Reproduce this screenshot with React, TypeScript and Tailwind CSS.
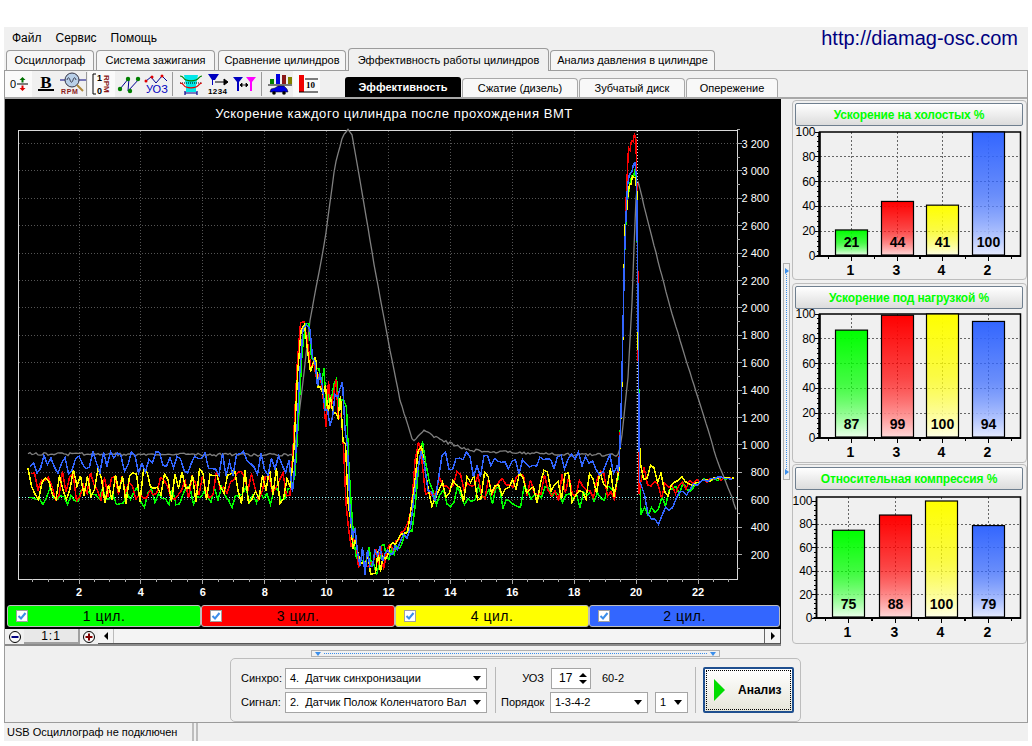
import React from "react";

type Pt = [number, number];

const TABS = [
  { label: "Осциллограф", cls: "w-[88px]" },
  { label: "Система зажигания", cls: "ml-[2px] w-[119px]" },
  { label: "Сравнение цилиндров", cls: "ml-[3px] w-[128px]" },
  { label: "Эффективность работы цилиндров", cls: "ml-[2px] w-[201px]", active: true },
  { label: "Анализ давления в цилиндре", cls: "ml-[1px] w-[165px]" },
];

const SUBTABS = [
  { label: "Сжатие (дизель)", w: "w-[116px]" },
  { label: "Зубчатый диск", w: "w-[106px]" },
  { label: "Опережение", w: "w-[92px]" },
];

const CHANNELS = [
  { label: "1 цил.", bg: "bg-[#00ff00]", w: "w-[194px]" },
  { label: "3 цил.", bg: "bg-[#ff0000]", w: "w-[194px]" },
  { label: "4 цил.", bg: "bg-[#ffff00]", w: "w-[194px]" },
  { label: "2 цил.", bg: "bg-[#3366ff]", w: "w-[191px]" },
];

const BAR_COLORS = [
  { id: "g", top: "#00ff00", bottom: "#eaffea" },
  { id: "r", top: "#ff0000", bottom: "#ffd8d8" },
  { id: "y", top: "#ffff00", bottom: "#ffffe4" },
  { id: "b", top: "#3366ff", bottom: "#e4eaff" },
];

function rng(seed: number) {
  let a = seed;
  return () => {
    a = (a + 0x6d2b79f5) | 0;
    let t = Math.imul(a ^ (a >>> 15), 1 | a);
    t = (t + Math.imul(t ^ (t >>> 7), 61 | t)) ^ t;
    return ((t ^ (t >>> 14)) >>> 0) / 4294967296;
  };
}

function interp(list: Pt[], x: number) {
  for (let i = 1; i < list.length; i++) {
    if (x <= list[i][0]) {
      const [x0, y0] = list[i - 1];
      const [x1, y1] = list[i];
      return y0 + ((y1 - y0) * (x - x0)) / (x1 - x0 || 1);
    }
  }
  return list[list.length - 1][1];
}

const HUMP: Pt[] = [
  [292, 490], [295, 450], [298, 380], [301, 335], [304, 320], [308, 330], [314, 370], [320, 385],
  [328, 405], [336, 395], [342, 400], [345, 430], [349, 500], [352, 530], [356, 552], [362, 560],
  [372, 560], [385, 555], [398, 545], [410, 528], [414, 500], [417, 460], [421, 445], [424, 460],
  [428, 490], [433, 505],
];

function trace(seed: number, base: number, amp: number, peak: number, tail: number, dx: number) {
  const r = rng(seed);
  const ctrl: Pt[] = [
    [20, base], [288, base], ...HUMP, [440, base], [616, base],
    [619, 470], [622, 380], [625, 230], [628, peak + 20], [632, peak + 8], [635, peak],
    [637, peak + 20], [638, 300], [639, 480 + tail],
    [648, 492 + tail], [670, 490 + tail * 0.5], [700, 481], [735, 477],
  ];
  const pts: string[] = [];
  let x = 28 + (seed % 5);
  while (x < 735) {
    let a = amp;
    if (x >= 292 && x < 308) a = 5;
    else if (x >= 308 && x < 350) a = 22;
    else if (x >= 350 && x < 385) a = 16;
    else if (x >= 385 && x < 412) a = 6;
    else if (x >= 412 && x < 440) a = 10;
    else if (x >= 616 && x < 639) a = 4;
    else if (x >= 639) a = Math.max(2, 24 - ((x - 639) * 22) / 60);
    const shift = x >= 292 && x < 440 ? dx : 0;
    const y = interp(ctrl, x + shift) + (r() * 2 - 1) * a;
    pts.push(`${x.toFixed(1)},${Math.min(578, Math.max(132, y)).toFixed(1)}`);
    if (x >= 616 && x < 640) x += 1.5;
    else if (x >= 308 && x < 400) x += 2.5;
    else x += 3.5;
  }
  return pts.join(" ");
}

const GRAY: Pt[] = [
  [28, 454], [292, 455], [296, 440], [302, 390], [310, 320], [325, 240], [335, 165], [343, 135], [348, 129],
  [352, 135], [360, 180], [375, 270], [390, 350], [400, 400], [413, 442], [424, 430], [440, 440],
  [470, 450], [500, 452], [550, 454], [618, 455], [621, 445], [628, 377], [632, 303], [635, 220], [637, 177],
  [650, 230], [670, 307], [687, 363], [703, 413], [717, 460], [732, 497], [737, 513],
];

function grayTrace() {
  const r = rng(77);
  const pts: string[] = [];
  for (let x = 28; x <= 737; x += 2) {
    const y = interp(GRAY, x) + (x < 292 || (x > 430 && x < 618) ? (r() - 0.5) * 3 : (r() - 0.5) * 1.2);
    pts.push(`${x},${y.toFixed(1)}`);
  }
  return pts.join(" ");
}

const XVALS = [2, 4, 6, 8, 10, 12, 14, 16, 18, 20, 22];
const YVALS = [3200, 3000, 2800, 2600, 2400, 2200, 2000, 1800, 1600, 1400, 1200, 1000, 800, 600, 400, 200];
const xPos = (t: number) => 79 + (t - 2) * 30.95;
const yPos = (v: number) => 143.5 + (3200 - v) * 0.137;

function MainChart() {
  const xTicks: number[] = [];
  for (let t = 0.5; t <= 23; t += 0.5) xTicks.push(t);
  const yTicks: number[] = [];
  for (let v = 100; v <= 3300; v += 100) yTicks.push(v);
  return (
    <svg width={776} height={506} viewBox="5 99 776 506" className="block tracking-normal">
      <text x={394} y={118} fill="#fff" fontSize={13} letterSpacing={0.55} textAnchor="middle" fontFamily="Liberation Sans">
        Ускорение каждого цилиндра после прохождения ВМТ
      </text>
      {XVALS.map((t) => (
        <line key={t} x1={xPos(t)} x2={xPos(t)} y1={131} y2={579} stroke="#555" strokeDasharray="1 2" shapeRendering="crispEdges" />
      ))}
      {YVALS.map((v) => (
        <line key={v} x1={19} x2={737} y1={yPos(v)} y2={yPos(v)} stroke="#555" strokeDasharray="1 2" shapeRendering="crispEdges" />
      ))}
      <rect x={18.5} y={130.5} width={719} height={449} fill="none" stroke="#d8d8d8" shapeRendering="crispEdges" />
      {xTicks.map((t) => (
        <line key={t} x1={xPos(t)} x2={xPos(t)} y1={579} y2={Number.isInteger(t / 2) ? 584 : 582} stroke="#aaa" shapeRendering="crispEdges" />
      ))}
      {yTicks.map((v) => (
        <line key={v} x1={737} x2={v % 200 === 0 ? 742 : 740} y1={yPos(v)} y2={yPos(v)} stroke="#aaa" shapeRendering="crispEdges" />
      ))}
      {XVALS.map((t) => (
        <text key={t} x={xPos(t)} y={596} fill="#fff" fontSize={11} fontWeight={700} textAnchor="middle" fontFamily="Liberation Sans">
          {t}
        </text>
      ))}
      {YVALS.map((v) => (
        <text key={v} x={769} y={yPos(v) + 4} fill="#fff" fontSize={11} textAnchor="end" fontFamily="Liberation Sans">
          {v >= 1000 ? `${Math.floor(v / 1000)} ${String(v % 1000).padStart(3, "0")}` : v}
        </text>
      ))}
      <polyline points={grayTrace()} fill="none" stroke="#808080" strokeWidth={1.3} />
      <line x1={19} x2={737} y1={497.5} y2={497.5} stroke="#9ff" strokeDasharray="1 2" shapeRendering="crispEdges" />
      <line x1={637.5} x2={637.5} y1={131} y2={497} stroke="#ddd" strokeDasharray="1 2" shapeRendering="crispEdges" />
      <g fill="none" strokeWidth={1.5} shapeRendering="crispEdges">
        <polyline points={trace(11, 497, 11, 171, 14, -2)} stroke="#00ff00" />
        <polyline points={trace(23, 486, 15, 133, -4, 2)} stroke="#ff0000" />
        <polyline points={trace(35, 486, 18, 172, -12, 1)} stroke="#ffff00" />
        <polyline points={trace(42, 464, 13, 160, 22, -1)} stroke="#3366ff" />
      </g>
    </svg>
  );
}

type BarPanelProps = {
  title: string;
  values: number[];
  top: number;
  plotLeft: number;
  plotTop: number;
  plotBottom: number;
  zeroTop: number;
  bars: number[];
  prefix: string;
  cls: string;
};

function BarPanel({ title, values, top, plotLeft, plotTop, plotBottom, zeroTop, bars, prefix, cls }: BarPanelProps) {
  const svgTop = top + 26;
  const scale = (plotBottom - zeroTop) / 100;
  const yv = (v: number) => plotBottom - v * scale;
  const order = [1, 3, 4, 2];
  const minor: number[] = [];
  for (let v = 0; v <= 100; v += 4) minor.push(v);
  return (
    <div className={`h-[180px] w-[235px] rounded-[4px] border border-[#bdbdbd] pt-[2px] ${cls}`}>
      <div className="ml-[2px] flex h-[23px] w-[228px] items-center justify-center rounded-[2px] border border-[#6f7f8f] bg-gradient-to-b from-[#ffffff] to-[#dcdcdc] text-[12px] font-bold tracking-[-0.15px] text-[#00ff00]">
        {title}
      </div>
      <svg width={232} height={152} viewBox={`793 ${svgTop} 232 152`} className="block overflow-visible tracking-normal">
        <defs>
          {BAR_COLORS.map((c) => (
            <linearGradient key={c.id} id={prefix + c.id} x1="0" y1="0" x2="0" y2="1">
              <stop offset="0" stopColor={c.top} />
              <stop offset="0.5" stopColor={c.top} stopOpacity={0.72} />
              <stop offset="1" stopColor={c.bottom} />
            </linearGradient>
          ))}
        </defs>
        {[20, 40, 60, 80].map((v) => (
          <line key={v} x1={plotLeft} x2={1020} y1={yv(v)} y2={yv(v)} stroke="#666" strokeDasharray="2 2" shapeRendering="crispEdges" />
        ))}
        {bars.map((x) => (
          <line key={x} x1={x + 16} x2={x + 16} y1={plotTop} y2={plotBottom} stroke="#666" strokeDasharray="2 2" shapeRendering="crispEdges" />
        ))}
        <rect x={plotLeft} y={plotTop} width={1020.5 - plotLeft} height={plotBottom - plotTop} fill="none" stroke="#000" strokeWidth={1.5} />
        <line x1={plotLeft} x2={plotLeft} y1={plotTop} y2={plotBottom} stroke="#000" strokeWidth={prefix === "c" ? 1.5 : 2.5} />
        <line x1={plotLeft - 3} x2={1021} y1={plotBottom} y2={plotBottom} stroke="#000" strokeWidth={2} />
        {minor.map((v) => (
          <line key={v} x1={plotLeft - (v % 20 === 0 ? 5 : 3)} x2={plotLeft} y1={yv(v)} y2={yv(v)} stroke="#000" shapeRendering="crispEdges" />
        ))}
        {[0, 20, 40, 60, 80, 100].map((v) => (
          <text key={v} x={plotLeft - 4} y={yv(v) + 4} fontSize={12} textAnchor="end" fill="#000">
            {v}
          </text>
        ))}
        {bars.map((x, i) => {
          const y = Math.max(yv(values[i]), plotTop);
          return (
            <g key={x}>
              <line x1={x + 16} x2={x + 16} y1={plotBottom} y2={plotBottom + 5} stroke="#000" />
              <line x1={x - 7} x2={x - 7} y1={plotBottom} y2={plotBottom + 3} stroke="#000" />
              <line x1={x + 39} x2={x + 39} y1={plotBottom} y2={plotBottom + 3} stroke="#000" />
              <rect x={x} y={y} width={32} height={plotBottom - 1 - y} fill={`url(#${prefix}${BAR_COLORS[i].id})`} stroke="#000" strokeWidth={1.2} />
              <text x={x + 16} y={plotBottom - 9} fontSize={14} fontWeight={700} textAnchor="middle" fill="#000">
                {values[i]}
              </text>
              <text x={x + 15} y={plotBottom + 19} fontSize={14} fontWeight={700} textAnchor="middle" fill="#000">
                {order[i]}
              </text>
            </g>
          );
        })}
      </svg>
    </div>
  );
}

function ToolIcon({ n }: { n: number }) {
  const common = { width: 26, height: 24, viewBox: "0 0 26 24" };
  const font = "Liberation Sans";
  switch (n) {
    case 0:
      return (
        <svg {...common}>
          <text x={4} y={16} fontSize={11} fontFamily={font} fill="#000">0</text>
          <line x1={11} x2={22} y1={12} y2={12} stroke="#000" />
          <path d="M16.5 5l3 3h-2v2.5h-2V8h-2z" fill="#007000" />
          <path d="M16.5 19l3-3h-2v-2.5h-2V16h-2z" fill="#e00000" />
        </svg>
      );
    case 1:
      return (
        <svg {...common}>
          <text x={13} y={16} fontSize={17} fontWeight={700} fontFamily="Liberation Serif" fill="#000" textAnchor="middle">B</text>
          <rect x={5} y={17} width={16} height={2} fill="#000" />
        </svg>
      );
    case 2:
      return (
        <svg {...common}>
          <line x1={0} x2={26} y1={8} y2={8} stroke="#000080" />
          <circle cx={12} cy={8} r={7} fill="#b8cfe8" stroke="#334" />
          <path d="M7 8c1-3 2-3 3 0s2 3 3 0 2-3 3 0" fill="none" stroke="#223" strokeWidth={0.8} />
          <line x1={17} x2={23} y1={13} y2={19} stroke="#b08a3a" strokeWidth={2} />
          <text x={1} y={22} fontSize={7} fontWeight={700} fontFamily={font} fill="#8b1a1a" letterSpacing={0.6}>RPM</text>
        </svg>
      );
    case 3:
      return (
        <svg {...common}>
          <path d="M7 2H4v20h3" fill="none" stroke="#000" />
          <text x={8} y={9} fontSize={9} fontWeight={700} fontFamily={font} fill="#000">1</text>
          <text x={8} y={22} fontSize={9} fontWeight={700} fontFamily={font} fill="#000">0</text>
          <text x={0} y={0} fontSize={8} fontWeight={700} fontFamily={font} fill="#8b1a1a" transform="translate(15 3) rotate(90)">RPM</text>
        </svg>
      );
    case 4:
      return (
        <svg {...common}>
          <polyline points="4,17 13,6 12,19 24,6" fill="none" stroke="#000090" />
          <g fill="#008000">
            <circle cx={4} cy={17} r={2.2} />
            <circle cx={12} cy={7} r={2.2} />
            <circle cx={14} cy={19} r={2.2} />
            <circle cx={22} cy={7} r={2.2} />
          </g>
        </svg>
      );
    case 5:
      return (
        <svg {...common}>
          <polyline points="3,9 8,5 13,11 19,4 24,9" fill="none" stroke="#000090" />
          <g fill="#e00000">
            <circle cx={3} cy={9} r={1.5} />
            <circle cx={9} cy={5} r={1.5} />
            <circle cx={19} cy={4} r={1.5} />
          </g>
          <text x={3} y={21} fontSize={11} fontFamily={font} fill="#0000c0">УОЗ</text>
        </svg>
      );
    case 6:
      return (
        <svg {...common}>
          <path d="M6 3h14l-2 11v6H8v-6z" fill="#00e8e8" />
          <path d="M2 4c4 0 3 3 6 4s7 1 10 0 3-4 6-4" fill="none" stroke="#008000" strokeWidth={1.2} />
          <line x1={2} x2={24} y1={11} y2={11} stroke="#000" strokeDasharray="1 1" />
          <path d="M2 11c4 0 3 3 6 4s7 1 10 0 3-4 6-4" fill="none" stroke="#e00000" strokeWidth={1.2} />
          <path d="M7 21h12M7 19v4M19 19v4" fill="none" stroke="#000090" strokeWidth={1.2} />
        </svg>
      );
    case 7:
      return (
        <svg {...common}>
          <path d="M3 2h11l-4 6H8v5H7V8z" fill="#0000c0" />
          <path d="M10 10h12M19 7l4 3-4 3z" fill="#000" stroke="#000" />
          <text x={3} y={22} fontSize={8} fontWeight={700} fontFamily={font} fill="#000" letterSpacing={0.4}>1234</text>
        </svg>
      );
    case 8:
      return (
        <svg {...common}>
          <path d="M1 5h10l-4 5v9H5v-9z" fill="#0000c0" />
          <path d="M14 5h10l-4 5v9h-2v-9z" fill="#ff00ff" />
          <path d="M8 13h8M8 13l2-2v4zM16 13l-2-2v4z" fill="#000" stroke="#000" strokeWidth={0.8} />
        </svg>
      );
    case 9:
      return (
        <svg {...common}>
          <rect x={3} y={7} width={4} height={5} fill="#008000" />
          <rect x={9} y={2} width={4} height={10} fill="#0000e0" />
          <rect x={15} y={3} width={4} height={9} fill="#8b1a1a" />
          <rect x={21} y={5} width={4} height={7} fill="#808000" />
          <line x1={1} x2={25} y1={13} y2={13} stroke="#000" />
          <path d="M3 20l1-3 4-1 3-2h6l3 3 1 3z" fill="#0000e0" stroke="#000" strokeWidth={0.5} />
          <circle cx={7} cy={21} r={1.8} fill="#000" />
          <circle cx={17} cy={21} r={1.8} fill="#000" />
        </svg>
      );
    default:
      return (
        <svg {...common}>
          <rect x={5} y={3} width={5} height={17} fill="#f00000" />
          <text x={12} y={16} fontSize={9} fontWeight={700} fontFamily="Liberation Serif" fill="#000">10</text>
          <line x1={11} x2={24} y1={7} y2={7} stroke="#000" />
          <line x1={5} x2={24} y1={20} y2={20} stroke="#000" />
        </svg>
      );
  }
}

const TOOL_SEPS: Record<number, string> = {
  2: "mr-[1px]",
  5: "ml-[3px] mr-[4px]",
  8: "ml-[3px] mr-[4px]",
};

function Toolbar() {
  const lit = [0, 3, 10];
  return (
    <div className="flex h-[26px] w-[340px] items-center">
      {Array.from({ length: 11 }).map((_, i) => (
        <React.Fragment key={i}>
          <div className={`flex h-[26px] w-[27px] items-center justify-center ${lit.includes(i) ? "bg-[#fafafa]" : ""}`}>
            <ToolIcon n={i} />
          </div>
          {TOOL_SEPS[i] && <div className={`h-[24px] w-[1px] bg-[#9a9a9a] ${TOOL_SEPS[i]}`} />}
        </React.Fragment>
      ))}
    </div>
  );
}

function Select({ value, w }: { value: string; w: string }) {
  return (
    <div className={`flex h-[21px] items-center justify-between border border-[#a5a5a5] bg-white pl-[4px] pr-[5px] ${w}`}>
      <span className="whitespace-pre text-[11px] text-black">{value}</span>
      <span className="ml-[2px] h-0 w-0 shrink-0 border-x-[4px] border-t-[5px] border-x-transparent border-t-black" />
    </div>
  );
}

function Checkbox() {
  return (
    <span className="flex h-[12px] w-[12px] items-center justify-center border border-[#a0a0a0] bg-white">
      <svg width={10} height={10} viewBox="0 0 10 10">
        <path d="M1.5 5l2.5 2.5L8.5 2" fill="none" stroke="#3b8eea" strokeWidth={2} />
      </svg>
    </span>
  );
}

function RoundBtn({ plus }: { plus?: boolean }) {
  return (
    <svg width={14} height={14} viewBox="0 0 14 14">
      <circle cx={7} cy={7} r={5.5} fill="#f8f8f8" stroke="#000" />
      <rect x={3.5} y={6} width={7} height={2} fill={plus ? "#800000" : "#000080"} />
      {plus && <rect x={6} y={3.5} width={2} height={7} fill="#800000" />}
    </svg>
  );
}

export default function App() {
  return (
    <div className="h-[746px] w-[1032px] overflow-hidden bg-white pt-[27px] font-['Liberation_Sans',sans-serif] text-[11px] text-black">
      <div className="ml-[4px] h-[714px] w-[1024px] bg-[#f0f0f0]">
        {/* menu */}
        <div className="flex h-[21px] items-center justify-between">
          <div className="flex gap-[14px] pl-[8px] text-[12px]">
            <span>Файл</span>
            <span>Сервис</span>
            <span>Помощь</span>
          </div>
          <span className="mr-[10px] text-[20px] leading-none text-[#000080]">http://diamag-osc.com</span>
        </div>

        {/* tabs */}
        <div className="flex h-[22px] items-end pl-[2px]">
          {TABS.map((t) => (
            <div
              key={t.label}
              className={`flex items-center justify-center rounded-t-[4px] border border-b-0 border-[#9c9c9c] ${t.cls} ${t.active ? "z-10 -mb-px h-[23px] bg-[#f0f0f0]" : "h-[20px] bg-[#f6f6f6]"}`}
            >
              {t.label}
            </div>
          ))}
        </div>

        {/* main frame */}
        <div className="h-[653px] border border-[#9c9c9c]">
          <div className="flex h-[28px] items-end border-b-2 border-[#a8a8a8]">
            <Toolbar />
            <div className="flex h-[20px] items-end">
              <div className="flex h-[20px] w-[116px] items-center justify-center rounded-t-[3px] bg-black font-bold text-white">Эффективность</div>
              {SUBTABS.map((t) => (
                <div key={t.label} className={`ml-[1px] flex h-[19px] items-center justify-center rounded-t-[4px] border border-b-0 border-[#a8a8a8] bg-[#f8f8f8] ${t.w}`}>
                  {t.label}
                </div>
              ))}
            </div>
          </div>

          <div className="flex h-[547px]">
            <div className="w-[776px]">
              <div className="h-[530px] bg-black">
                <MainChart />
                <div className="flex h-[24px] pl-[2px]">
                  {CHANNELS.map((c) => (
                    <div key={c.label} className={`relative flex h-[22px] items-center justify-center rounded-[3px] border border-[#bdbdbd] text-[14px] tracking-[0.5px] ${c.bg} ${c.w}`}>
                      <span className="absolute left-[8px] top-[4px]">
                        <Checkbox />
                      </span>
                      {c.label}
                    </div>
                  ))}
                </div>
              </div>
              <div className="flex h-[17px] items-center border-b-2 border-[#8a8a8a]">
                <span className="ml-[1px] flex w-[18px] justify-center">
                  <RoundBtn />
                </span>
                <div className="flex h-[15px] w-[56px] items-center justify-center border-b-2 border-r-2 border-[#a0a0a0] bg-[#e8e8e8] text-[12px] tracking-[1px]">1:1</div>
                <span className="flex w-[18px] justify-center">
                  <RoundBtn plus />
                </span>
                <div className="flex h-[15px] flex-1 items-center justify-between border-b border-r border-[#555] bg-[#f4f4f4]">
                  <span className="flex h-full w-[16px] items-center justify-center border-r border-[#bbb]">
                    <span className="h-0 w-0 border-y-[4px] border-r-[4px] border-y-transparent border-r-black" />
                  </span>
                  <span className="flex h-full w-[16px] items-center justify-center border-l border-[#666]">
                    <span className="h-0 w-0 border-y-[4px] border-l-[4px] border-y-transparent border-l-black" />
                  </span>
                </div>
              </div>
            </div>

            {/* vertical splitter */}
            <div className="w-[11px] pl-[2px] pt-[164px]">
              <div className="flex h-[217px] w-[7px] flex-col items-center justify-between border border-[#b0b0b0] py-[4px]">
                <span className="h-0 w-0 border-y-[3px] border-l-[4px] border-y-transparent border-l-[#3b8eea]" />
                <span className="w-0 flex-1 border-l border-dotted border-[#3b8eea]" />
                <span className="h-0 w-0 border-y-[3px] border-l-[4px] border-y-transparent border-l-[#3b8eea]" />
              </div>
            </div>

            <div className="flex flex-col pt-[1px]">
              <BarPanel title="Ускорение на холостых %" values={[21, 44, 41, 100]} top={100} plotLeft={819.5} plotTop={132} plotBottom={256} zeroTop={132} bars={[835.5, 881.5, 926.5, 972.5]} prefix="a" cls="" />
              <BarPanel title="Ускорение под нагрузкой %" values={[87, 99, 100, 94]} top={283} plotLeft={819.5} plotTop={314} plotBottom={438} zeroTop={314} bars={[835.5, 881.5, 926.5, 972.5]} prefix="b" cls="mt-[3px]" />
              <BarPanel title="Относительная компрессия %" values={[75, 88, 100, 79]} top={464} plotLeft={816.5} plotTop={497} plotBottom={618} zeroTop={501} bars={[832.5, 879.5, 925.5, 972.5]} prefix="c" cls="mt-[1px]" />
            </div>
          </div>

          {/* bottom controls */}
          <div className="pl-[225px] pt-[4px]">
            <div className="ml-[81px] flex h-[7px] w-[409px] items-center gap-[3px] border border-[#b0b0b0] px-[3px]">
              <span className="h-0 w-0 border-x-[3px] border-t-[4px] border-x-transparent border-t-[#3b8eea]" />
              <span className="h-0 flex-1 border-t border-dotted border-[#3b8eea]" />
              <span className="h-0 w-0 border-x-[3px] border-t-[4px] border-x-transparent border-t-[#3b8eea]" />
            </div>
            <div className="mt-[1px] flex h-[64px] w-[571px] items-center rounded-[5px] border border-[#bdbdbd] pl-[10px] text-[11px]">
              <div className="flex w-[254px] flex-col gap-[3px]">
                <div className="flex items-center">
                  <span className="w-[44px]">Синхро:</span>
                  <Select value="4.  Датчик синхронизации" w="w-[202px]" />
                </div>
                <div className="flex items-center">
                  <span className="w-[44px]">Сигнал:</span>
                  <Select value="2.  Датчик Полож Коленчатого Вал" w="w-[202px]" />
                </div>
              </div>
              <div className="h-[46px] w-[1px] bg-[#b8b8b8]" />
              <div className="flex w-[199px] flex-col gap-[3px] pl-[5px]">
                <div className="flex items-center">
                  <span className="w-[43px] text-right">УОЗ</span>
                  <div className="ml-[7px] flex h-[21px] w-[40px] items-center justify-between border border-[#a5a5a5] bg-white pl-[7px] pr-[3px] text-[12px]">
                    <span>17</span>
                    <span className="flex flex-col gap-[3px]">
                      <span className="h-0 w-0 border-x-[4px] border-b-[4px] border-x-transparent border-b-black" />
                      <span className="h-0 w-0 border-x-[4px] border-t-[4px] border-x-transparent border-t-black" />
                    </span>
                  </div>
                  <span className="ml-[11px]">60-2</span>
                </div>
                <div className="flex items-center">
                  <span className="w-[43px] text-right">Порядок</span>
                  <span className="ml-[6px]">
                    <Select value="1-3-4-2" w="w-[98px]" />
                  </span>
                  <span className="ml-[7px]">
                    <Select value="1" w="w-[33px]" />
                  </span>
                </div>
              </div>
              <div className="h-[46px] w-[1px] bg-[#b8b8b8]" />
              <div className="ml-[7px] flex h-[46px] w-[91px] items-center rounded-[2px] border-2 border-[#1f4f8f] bg-gradient-to-b from-[#ffffff] to-[#e6e6da] p-[1px]">
                <div className="flex h-full w-full items-center border border-dotted border-black pl-[7px]">
                  <span className="h-0 w-0 border-y-[11px] border-l-[11px] border-y-transparent border-l-[#00dd00]" />
                  <span className="ml-[13px] text-[12px] font-bold">Анализ</span>
                </div>
              </div>
            </div>
          </div>
        </div>

        {/* status bar */}
        <div className="flex h-[18px]">
          <div className="flex w-[190px] items-center border-r-2 border-[#bdbdbd] pl-[3px]">USB Осциллограф не подключен</div>
          <div className="ml-[2px] flex-1 border-l-2 border-[#bdbdbd]" />
        </div>
      </div>
    </div>
  );
}
